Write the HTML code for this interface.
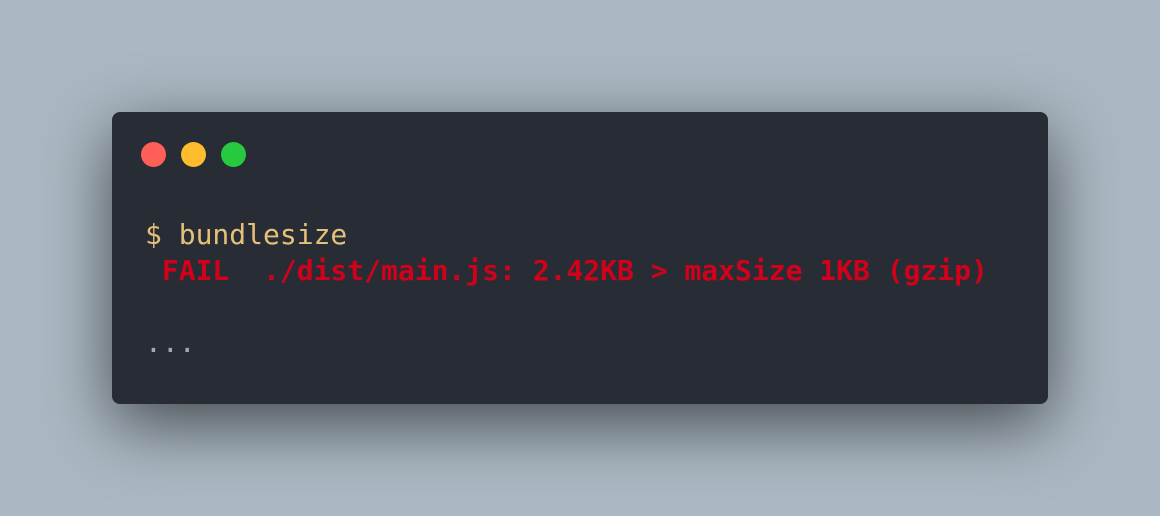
<!DOCTYPE html>
<html><head><style>
html,body{margin:0;padding:0;width:1160px;height:516px;overflow:hidden;background:#abb8c3;}
.win{position:absolute;left:112px;top:112px;width:936px;height:292px;background:#282c34;border-radius:8px;box-shadow:0 20px 68px rgba(0,0,0,0.6);}
.dot{position:absolute;top:30px;width:25px;height:25px;border-radius:50%;}
pre{position:absolute;left:33px;top:105px;margin:0;font-family:"DejaVu Sans Mono","Liberation Mono",monospace;font-size:28px;line-height:36px;color:#e5c07b;}
.r{color:#d0021b;font-weight:bold;}
.g{color:#a0a8b8;}
</style></head><body>
<div class="win">
<div class="dot" style="left:29px;background:#ff5f56"></div>
<div class="dot" style="left:69px;background:#ffbd2e"></div>
<div class="dot" style="left:109px;background:#27c93f"></div>
<pre>$ bundlesize
<span class="r"> FAIL  ./dist/main.js: 2.42KB &gt; maxSize 1KB (gzip)</span>

<span class="g">...</span></pre>
</div>
</body></html>
